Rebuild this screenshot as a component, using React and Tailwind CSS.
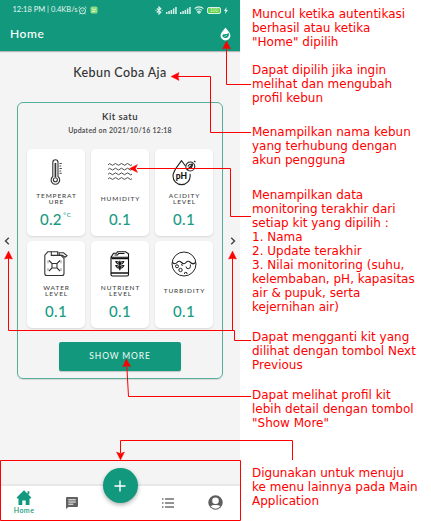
import React from "react";

const Thermometer = () => (
  <svg width="26" height="28" viewBox="0 0 26 28" fill="none" stroke="#333" strokeWidth="1.1">
    <path d="M9.8 18.5V4.4a2.6 2.6 0 0 1 5.2 0v14.1a4.3 4.3 0 1 1-5.2 0z" />
    <path d="M12.4 5v14" strokeWidth="1.7" />
    <circle cx="12.4" cy="21.8" r="2" />
    <path d="M16.5 5.5h2.3M16.5 8h1.7M16.5 10.5h2.3M16.5 13h1.7M16.5 15.3h2.3" strokeWidth="0.9" />
  </svg>
);

const Waves = () => (
  <svg width="26" height="28" viewBox="0 0 26 28" fill="none" stroke="#444" strokeWidth="0.95">
    {[7, 11.7, 16.4, 21.1].map((y) => (
      <path key={y} d={`M1 ${y}q1.5-2.4 3-.6t3 0q1.500-1.8 3 0t3 0q1.500-1.800 3 0t3 0q1.500-1.800 3 0t3 .3`} />
    ))}
  </svg>
);

const Acidity = () => (
  <svg width="28" height="28" viewBox="0 0 28 28" fill="none" stroke="#222" strokeWidth="1.1">
    <path d="M15.5 8 11.500 2.600C8 8 3 12.500 3 18a8.600 8.600 0 0 0 17.200 0c0-.8-.1-1.500-.3-2.200" />
    <circle cx="20.300" cy="8.500" r="4.500" />
    <path d="M17 12l6-6M18 8.500c.5-2 2.500-2.500 4.500-2.500 0 2.500-.5 4.500-3.500 4.500M24 3l1.500 1" />
    <text x="5.800" y="20.500" fill="#111" stroke="none" fontSize="8.500" fontWeight="900" fontFamily="Lato, sans-serif">pH</text>
  </svg>
);

const JerryCan = () => (
  <svg width="26" height="28" viewBox="0 0 26 28" fill="none" stroke="#333" strokeWidth="1.1">
    <path d="M8.300 1.800h6.400v3.600H18l3 3v15.100a2 2 0 0 1-2 2H3.800a2 2 0 0 1-2-2V5.200l3-3.400z" />
    <path d="M8.300 1.800v3.600h6.400M16 2.800h4.500l3.500 2.900-2 1.500-2.500-2h-3z" />
    <path d="M6 10.500l3 3v4.500l-3 3M17 10.500l-3 3v4.500l3 3M9 13.500h5M9 18h5" />
    <path d="M5 10.300v3M18 10.300v3M5 18v3M18 18v3" strokeWidth=".5" />
  </svg>
);

const Fertilizer = () => (
  <svg width="26" height="28" viewBox="0 0 26 28" fill="none" stroke="#111" strokeWidth="1.100">
    <path d="M4 7.300h17.500v17.200a1.500 1.500 0 0 1-1.500 1.500H5.500A1.500 1.500 0 0 1 4 24.500zM4 7.300l2.500-4h3l1-1.500h8l3 2v3.500" />
    <path d="M4.500 8.500h17M4 23h17.500" strokeWidth="1.500" />
    <path d="M7.500 5h3l1-1.500h6" />
    <path d="M12.800 10.700v9.500" strokeWidth="1.300" />
    <path d="M12.800 14c-1 .3-3.500-.2-4-2.500 2-.2 3.500.8 4 2.500 1 .3 3.500-.2 4-2.500-2-.2-3.500.8-4 2.500M12.800 18c-1 .3-3.500-.2-4-2.500 2-.2 3.500.8 4 2.500 1 .3 3.500-.2 4-2.500-2-.2-3.500.8-4 2.500" />
  </svg>
);

const Turbidity = () => (
  <svg width="28" height="28" viewBox="0 0 28 28" fill="none" stroke="#222" strokeWidth="1">
    <circle cx="14" cy="14" r="12" />
    <path d="M2.500 12.500q2.500 2.500 4.500 0t4.500 0 4.500 0 4.500 0 5 0" strokeWidth="1.200" />
    <circle cx="7" cy="16.300" r="1.500" />
    <circle cx="10.500" cy="20" r="1.700" />
    <path d="M11 14.500l2 1M16 16.500a2.200 2.200 0 1 0 4.400 0v-2M14.500 24a1.300 1.300 0 1 1 2.500 0" />
  </svg>
);

const cards = [
  { label: ["TEMPERAT", "URE"], value: "0.2", unit: "°C", icon: <Thermometer /> },
  { label: ["HUMIDITY"], value: "0.1", icon: <Waves /> },
  { label: ["ACIDITY", "LEVEL"], value: "0.1", icon: <Acidity /> },
  { label: ["WATER", "LEVEL"], value: "0.1", icon: <JerryCan /> },
  { label: ["NUTRIENT", "LEVEL"], value: "0.1", icon: <Fertilizer /> },
  { label: ["TURBIDITY"], value: "0.1", icon: <Turbidity /> },
];

function Card({ label, value, unit, icon }) {
  return (
    <div className="flex h-[87px] flex-col items-center rounded-[5px] bg-white pt-[9px] shadow-[0_1px_2px_rgba(0,0,0,0.12)]">
      <div className="flex h-7 justify-center">{icon}</div>
      <div className="mt-1 flex h-[18px] flex-col items-center justify-center pl-px text-[6.500px] font-medium leading-[6.500px] tracking-[0.900px] text-[#444]">
        {label.map((line) => (
          <span key={line}>{line}</span>
        ))}
      </div>
      <div className="flex items-start text-[15px] font-medium leading-[22px] tracking-[0.300px] text-[#199b80]">
        {value}
        {unit && <span className="ml-[1.500px] text-[6.500px] leading-[13px] tracking-[0.800px]">{unit}</span>}
      </div>
    </div>
  );
}

const Signal = () => (
  <svg width="11" height="7" viewBox="0 0 11 7" fill="#d9f3ec">
    <path d="M0 5h1.500v2H0zM2.300 4h1.500v3H2.300zM4.600 3h1.500v4H4.600zM6.900 1.500h1.500V7H6.900zM9.200 0h1.500v7H9.200z" />
  </svg>
);

function Header() {
  return (
    <header className="h-[51px] bg-[#12987c] text-white shadow-[0_1px_1px_rgba(0,0,0,0.25)]">
      <div className="flex h-5 items-center pl-[12.500px] pr-[12px]">
        <span className="w-[65px] whitespace-nowrap text-[7.500px] leading-none text-[#e3f6f1]">12:18 PM | 0.4KB/s</span>
        <svg width="9" height="9" viewBox="0 0 9 9" fill="none" stroke="#e3f6f1" strokeWidth=".9">
          <circle cx="4.500" cy="4.800" r="3" />
          <path d="M.5 2 2.200.6M8.500 2 6.800.6M3.300 4.200l1.200 1 1.300-1.200M2.300 7.300l-.8 1M6.700 7.300l.8 1" />
        </svg>
        <svg className="ml-[3px]" width="8" height="8" viewBox="0 0 8 8">
          <rect x=".5" y=".5" width="7" height="7" rx="1.500" fill="#8ddc83" />
          <path d="M2 2.500 4 4l2-1M2 5.500h3" stroke="#d8f5c6" fill="none" />
        </svg>
        <div className="ml-auto flex items-center gap-[3px]">
          <svg width="8" height="9" viewBox="0 0 8 9" fill="none" stroke="#d9f3ec" strokeWidth="1.200">
            <path d="M1.800 2.500l4 3.800L4 8V1l1.800 1.700-4 3.800M.4 4.500h.9M6.700 4.500h.9" />
          </svg>
          <Signal />
          <Signal />
          <svg width="10" height="8" viewBox="0 0 10 8" fill="none" stroke="#d9f3ec" strokeWidth="1.100">
            <path d="M.6 2.600a6.500 6.500 0 0 1 8.800 0M2 4.300a4.500 4.500 0 0 1 6 0M3.500 5.900a2.200 2.200 0 0 1 3 0L5 7.300z" />
          </svg>
          <div className="flex h-[7px] w-[14px] items-center justify-center rounded-[2px] border border-[#d9f3ec] bg-[#62cf48] text-[5px] leading-none text-[#dcffd0]">100</div>
          <svg width="4" height="7" viewBox="0 0 4 7" fill="#d9f3ec"><path d="M2.500 0 0 4h1.500L1 7l3-4H2.300z" /></svg>
        </div>
      </div>
      <div className="flex h-[28px] items-center justify-between pl-[10px] pr-[9px]">
        <h1 className="text-[12px] font-medium tracking-[0.550px]">Home</h1>
        <svg width="11" height="14" viewBox="0 0 11 14">
          <path d="M5.500.5C3.700 3.300.6 5.700.6 8.800a4.900 4.700 0 0 0 9.800 0C10.400 5.700 7.300 3.300 5.500.5z" fill="white" />
          <path d="M2.300 8.200C4 6.500 6 8 8.900 6.100c.4 3-1 5-3.400 5-2 0-3-1.300-3.200-2.900z" fill="#12987c" />
          <path d="M3.500 10.300 7 8.200" stroke="white" strokeWidth=".5" />
        </svg>
      </div>
    </header>
  );
}

const Chevron = ({ flip }) => (
  <svg className={flip ? "-scale-x-100" : ""} width="6" height="8" viewBox="0 0 6 8" fill="none" stroke="#444" strokeWidth="1.400">
    <path d="M4.800.7 1.500 4l3.300 3.300" />
  </svg>
);

function BottomNav() {
  return (
    <nav className="mt-auto flex h-[37px] border-t-2 border-[#e8e8e8] bg-white pb-[2px]">
      <div className="flex w-12 flex-col items-center pt-[4px] text-[#12987c]">
        <svg width="16" height="15" viewBox="0 0 16 15" fill="currentColor">
          <path d="M8 .3 15.300 7.500 14.600 8.600H13.500V15H9.700v-4.500H6.300V15H2.500V8.600H1.400L.6 7.500zM11.500 1.300h1.800v3h-1.800z" />
        </svg>
        <span className="mt-px text-[7px] font-semibold leading-[9px] tracking-[0.450px]">Home</span>
      </div>
      <div className="flex w-12 items-center justify-center">
        <svg className="mt-px" width="12" height="12" viewBox="0 0 12 12">
          <path d="M1 0h10a1 1 0 0 1 1 1v8a1 1 0 0 1-1 1H2.400L0 12V1a1 1 0 0 1 1-1z" fill="#616161" />
          <path d="M2.300 2.800h7.500M2.300 5h7.500M2.300 7.200h5" stroke="white" />
        </svg>
      </div>
      <div className="flex w-12 justify-center">
        <button className="-mt-[18px] flex size-[35px] shrink-0 items-center justify-center rounded-full bg-[#12987c] shadow-[0_2px_4px_rgba(0,0,0,0.3)]">
          <svg width="12" height="12" viewBox="0 0 12 12" stroke="white" strokeWidth="1.400"><path d="M6 .5v11M.5 6h11" /></svg>
        </button>
      </div>
      <div className="flex w-12 items-center justify-center">
        <svg width="12" height="10" viewBox="0 0 12 10" stroke="#707070" strokeWidth="1.300">
          <path d="M0 1h1.500M3 1h9M0 5h1.500M3 5h9M0 9h1.500M3 9h9" />
        </svg>
      </div>
      <div className="flex w-12 items-center justify-center">
        <svg className="ml-[-1px]" width="15" height="15" viewBox="0 0 15 15">
          <circle cx="7.500" cy="7.500" r="7.200" fill="#5e5e5e" />
          <circle cx="7.500" cy="5.800" r="3.300" fill="white" />
          <path d="M2.600 11.300c1.700-1.600 8.100-1.600 9.800 0a6.200 6.200 0 0 1-9.800 0z" fill="white" />
        </svg>
      </div>
    </nav>
  );
}

function Note({ lines, className }) {
  return (
    <div className={className}>
      {lines.map((line) => (
        <p key={line} className="whitespace-nowrap">{line}</p>
      ))}
    </div>
  );
}

function Arrows() {
  return (
    <svg className="pointer-events-none absolute left-0 top-0" width="431" height="521" fill="none" stroke="#ff0000">
      <path d="M251 84.500H226.500V48M251 132.500H210.500V76.500H178M251 216.500H230.500V168.500H137M251 340.500H234.500V330.500H8.500V258M232.500 330.500V258M251 396.500H128.500L126.800 366M292.500 460V440.500H120.500V453" />
      <path d="M.5 460.500h240v60H.5z" />
      <g fill="#ff0000" stroke="#ff0000" strokeWidth="0.4">
        <path d="M226.500 41l4 8-4-1-4 1zM171 76.500l8-4-1 4 1 4zM129.500 168.500l8-4-2 4 2 4zM8.500 251l4 8-4-.5-4 .5zM232.500 251l4 8-4-.5-4 .5zM126.300 359l4.500 7.500-4-.8-4 1.300zM120.500 460l-4-8 4 1.500 4-1.500z" />
      </g>
    </svg>
  );
}

export default function App() {
  return (
    <div className="relative flex h-[521px] w-[431px] overflow-hidden bg-white">
      <main className="flex h-[521px] w-60 shrink-0 flex-col bg-[#f4f4f4] font-['Lato',sans-serif]">
        <Header />
        <h2 className="mt-[13px] text-center text-[12.500px] font-medium leading-[18px] tracking-[0.400px] text-[#333]">Kebun Coba Aja</h2>
        <div className="mt-5 flex items-center">
          <div className="flex w-[17px] justify-center pr-[3px]"><Chevron /></div>
          <section className="h-[277px] w-[206px] rounded-[6px] border border-[#55b09b] px-[9px] pt-[7px] shadow-[0_1px_1px_rgba(0,0,0,0.12)]">
            <h3 className="text-center text-[9.500px] font-semibold leading-[13px] tracking-[0.450px] text-[#333]">Kit satu</h3>
            <p className="mt-[2px] text-center text-[7px] font-semibold leading-[11px] tracking-[0.260px] text-[#444]">Updated on 2021/10/16 12:18</p>
            <div className="mt-[13px] grid grid-cols-3 gap-x-[6px] gap-y-[5px]">
              {cards.map((card) => (
                <Card key={card.label[0]} {...card} />
              ))}
            </div>
            <button className="mx-auto mt-[14px] flex h-[29px] w-[122px] items-center justify-center rounded-[2px] bg-[#12987c] text-[8.500px] font-medium tracking-[0.850px] text-[#e4f5f0] shadow-[0_1px_1px_rgba(0,0,0,0.2)]">SHOW MORE</button>
          </section>
          <div className="flex w-[17px] justify-center pl-[3px]"><Chevron flip /></div>
        </div>
        <BottomNav />
      </main>
      <aside className="flex flex-col pl-3 pt-[7px] font-['DejaVu_Sans',sans-serif] text-[12px] leading-[14px] text-[#ff0000]">
        <Note lines={["Muncul ketika autentikasi", "berhasil atau ketika", '"Home" dipilih']} />
        <Note className="mt-[14px]" lines={["Dapat dipilih jika ingin", "melihat dan mengubah", "profil kebun"]} />
        <Note className="mt-5" lines={["Menampilkan nama kebun", "yang terhubung dengan", "akun pengguna"]} />
        <Note
          className="mt-[21px]"
          lines={["Menampilkan data", "monitoring terakhir dari", "setiap kit yang dipilih :", "1. Nama", "2. Update terakhir", "3. Nilai monitoring (suhu,", "kelembaban, pH, kapasitas", "air & pupuk, serta", "kejernihan air)"]}
        />
        <Note className="mt-4" lines={["Dapat mengganti kit yang", "dilihat dengan tombol Next", "Previous"]} />
        <Note className="mt-4" lines={["Dapat melihat profil kit", "lebih detail dengan tombol", '"Show More"']} />
        <Note className="mt-9" lines={["Digunakan untuk menuju", "ke menu lainnya pada Main", "Application"]} />
      </aside>
      <Arrows />
    </div>
  );
}
